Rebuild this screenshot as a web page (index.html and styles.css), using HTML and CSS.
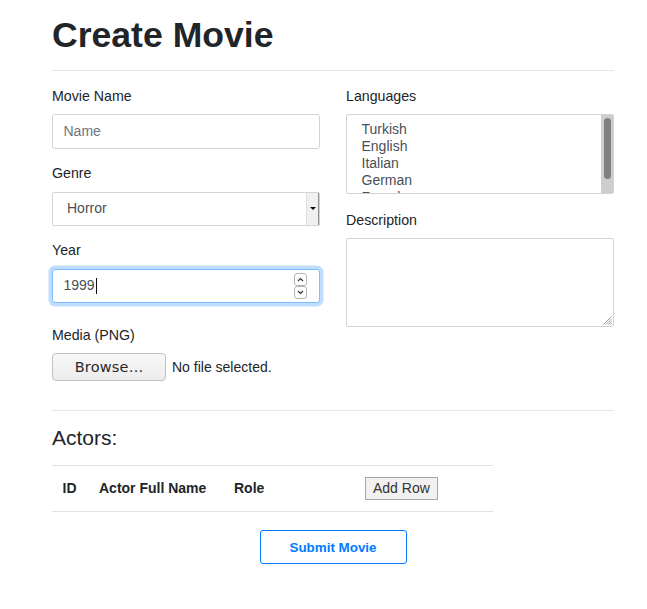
FILE: index.html
```html
<!DOCTYPE html>
<html lang="en">
<head>
<meta charset="utf-8">
<title>Create Movie</title>
<link rel="stylesheet" href="styles.css">
</head>
<body>
<div class="page">
  <h1 class="title">Create Movie</h1>
  <hr class="rule">
  <form class="form-grid">
    <div class="col">
      <div class="field">
        <label class="label">Movie Name</label>
        <div class="control"><span class="placeholder">Name</span></div>
      </div>
      <div class="field">
        <label class="label">Genre</label>
        <div class="control select">
          <span class="select-value">Horror</span>
          <span class="dropmarker"><span class="tri"></span></span>
        </div>
      </div>
      <div class="field field-year">
        <label class="label">Year</label>
        <div class="control focus">
          <span class="value">1999</span><span class="caret"></span>
          <span class="spin">
            <span class="spin-btn"><svg width="7" height="5" viewBox="0 0 7 5"><polyline points="1,4 3.5,1.5 6,4" fill="none" stroke="#333" stroke-width="1.2"/></svg></span>
            <span class="spin-btn"><svg width="7" height="5" viewBox="0 0 7 5"><polyline points="1,1 3.5,3.5 6,1" fill="none" stroke="#333" stroke-width="1.2"/></svg></span>
          </span>
        </div>
      </div>
      <div class="field field-file">
        <label class="label">Media (PNG)</label>
        <div class="file-row">
          <span class="browse">Browse…</span>
          <span class="file-status">No file selected.</span>
        </div>
      </div>
    </div>
    <div class="col">
      <div class="field">
        <label class="label">Languages</label>
        <div class="control multi">
          <div class="options">
            <div class="option">Turkish</div>
            <div class="option">English</div>
            <div class="option">Italian</div>
            <div class="option">German</div>
            <div class="option">French</div>
          </div>
          <div class="scroll-track"><div class="scroll-thumb"></div></div>
        </div>
      </div>
      <div class="field">
        <label class="label label-desc">Description</label>
        <div class="control textarea">
          <svg class="grip" width="10" height="10" viewBox="0 0 10 10">
            <path d="M9.5 1.5 L1.5 9.5 M9.5 4 L4 9.5 M9.5 6.5 L6.5 9.5 M9.5 8.5 L8.5 9.5" stroke="#9a9a9a" stroke-width="1" fill="none"/>
          </svg>
        </div>
      </div>
    </div>
  </form>
  <hr class="rule rule-actors">
  <h4 class="subtitle">Actors:</h4>
  <table class="actors">
    <thead>
      <tr>
        <th class="c-id">ID</th>
        <th class="c-name">Actor Full Name</th>
        <th class="c-role">Role</th>
        <th class="c-act"><span class="add-row">Add Row</span></th>
      </tr>
    </thead>
  </table>
  <div class="submit-wrap"><span class="submit">Submit Movie</span></div>
</div>
</body>
</html>
```
FILE: styles.css
```css
html, body {
  margin: 0;
  padding: 0;
  background: #fff;
}
body {
  font-family: "Liberation Sans", Arial, sans-serif;
  font-size: 14px;
  line-height: 21px;
  color: #212529;
}
.page {
  width: 562px;
  padding: 14px 0 0 52px;
}
.title {
  margin: 0;
  font-size: 35.6px;
  line-height: 42px;
  font-weight: bold;
}
.rule {
  margin: 14px 0;
  border: 0;
  border-top: 1px solid rgba(0, 0, 0, 0.1);
  height: 0;
}
.form-grid {
  display: grid;
  grid-template-columns: 268px 268px;
  column-gap: 26px;
  padding-top: 0.5px;
}
.field {
  margin-bottom: 14.5px;
}
.label {
  display: block;
  margin-bottom: 7.5px;
  font-size: 14.2px;
}
.label-desc {
  padding-top: 1px;
}
.control {
  box-sizing: border-box;
  height: 34.5px;
  border: 1px solid #ced4da;
  border-radius: 3px;
  background: #fff;
  display: flex;
  align-items: center;
  padding: 0 10.5px;
}
.placeholder {
  color: #6c757d;
}
.select {
  padding: 0;
  height: 34px;
  align-items: stretch;
  border-radius: 2px;
}
.select-value {
  flex: 1;
  display: flex;
  align-items: center;
  padding-left: 14px;
  color: #495057;
}
.dropmarker {
  width: 11px;
  background: #f0f0f0;
  border-left: 1px solid #dedede;
  border-right: 1px solid #8f8f8f;
  display: flex;
  align-items: center;
  justify-content: center;
}
.tri {
  width: 0;
  height: 0;
  border-left: 3px solid transparent;
  border-right: 3px solid transparent;
  border-top: 3px solid #111;
}
.field-year {
  margin-bottom: 21.5px;
}
.focus {
  border-color: #80bdff;
  box-shadow: 0 0 0 3.5px rgba(0, 123, 255, 0.25);
  color: #495057;
}
.value {
  color: #495057;
}
.caret {
  width: 1px;
  height: 16px;
  background: #111;
  margin-left: 1px;
}
.spin {
  margin-left: auto;
  margin-right: 1.5px;
  display: flex;
  flex-direction: column;
}
.spin-btn {
  box-sizing: border-box;
  width: 13px;
  height: 13px;
  border: 1px solid #b4b4b4;
  border-radius: 3px;
  display: flex;
  align-items: center;
  justify-content: center;
  background: #fff;
}
.field-file {
  margin-bottom: 0;
}
.file-row {
  display: flex;
  align-items: center;
}
.browse {
  box-sizing: border-box;
  width: 114px;
  height: 28px;
  border: 1px solid #c2c2c2;
  border-radius: 4px;
  background: linear-gradient(#f7f7f7, #ececec);
  font-family: "DejaVu Sans", sans-serif;
  font-size: 14.5px;
  color: #2a2a2a;
  display: flex;
  align-items: center;
  justify-content: center;
  letter-spacing: 0.2px;
}
.file-status {
  margin-left: 6px;
}
.multi {
  height: 80px;
  padding: 0;
  align-items: stretch;
  border-radius: 2px;
}
.options {
  flex: 1;
  overflow: hidden;
  padding: 5.5px 0 0 10.5px;
  color: #495057;
}
.option {
  line-height: 17px;
  padding-left: 4px;
}
.scroll-track {
  width: 12px;
  background: #cdcdcd;
  position: relative;
}
.scroll-thumb {
  position: absolute;
  left: 3px;
  top: 3px;
  width: 7px;
  height: 61px;
  border-radius: 4px;
  background: #808080;
}
.textarea {
  height: 89px;
  padding: 0 1px 1px 0;
  align-items: flex-end;
  justify-content: flex-end;
  border-radius: 2px;
}
.grip {
  display: block;
}
.rule-actors {
  margin-top: 29px;
}
.subtitle {
  margin: 0 0 14.8px;
  font-size: 21px;
  line-height: 25.2px;
  font-weight: normal;
}
.actors {
  width: 441px;
  border-collapse: collapse;
}
.actors th {
  border-top: 1px solid #dee2e6;
  border-bottom: 1px solid #dee2e6;
  padding: 10px 10.5px;
  height: 25px;
  text-align: left;
  font-weight: bold;
  vertical-align: middle;
  box-sizing: content-box;
}
.c-id { width: 15.5px; }
.c-name { width: 114px; }
.c-role { width: 110px; }
.add-row {
  display: inline-block;
  box-sizing: border-box;
  height: 23px;
  line-height: 21px;
  padding: 0 7px;
  border: 1px solid #a6a6a6;
  background: #f2f1f0;
  color: #333;
  font-weight: normal;
  margin-top: -1px;
}
.submit-wrap {
  margin-top: 18px;
  width: 562px;
  display: flex;
  justify-content: center;
}
.submit {
  box-sizing: border-box;
  width: 147px;
  height: 34px;
  border: 1px solid #007bff;
  border-radius: 3px;
  color: #007bff;
  font-weight: bold;
  font-size: 13.4px;
  display: flex;
  align-items: center;
  justify-content: center;
}
```
